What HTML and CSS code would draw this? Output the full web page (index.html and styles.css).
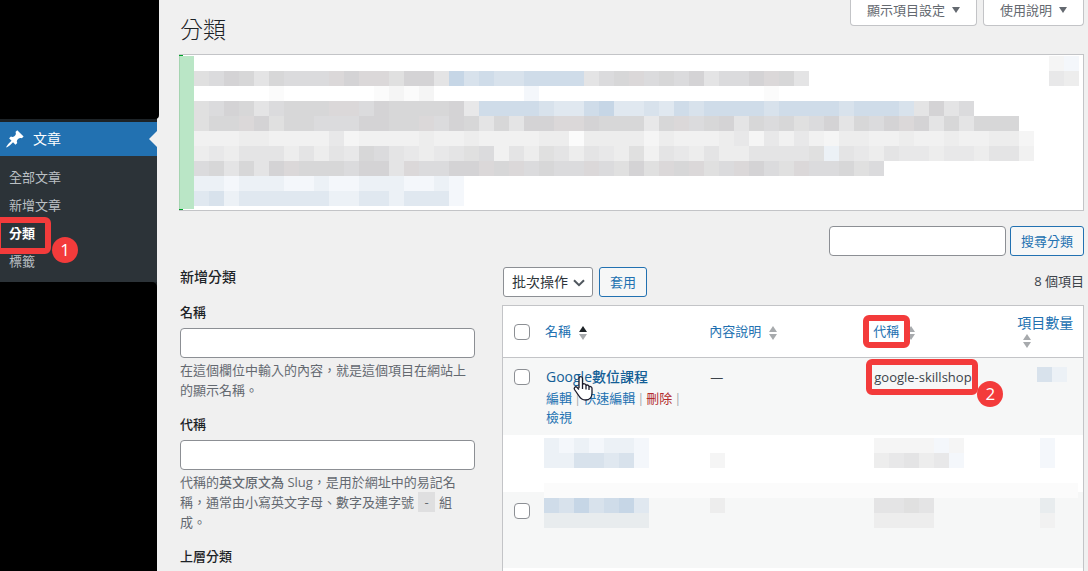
FILE: index.html
```html
<!DOCTYPE html>
<html lang="zh-Hant">
<head>
<meta charset="utf-8">
<title>分類</title>
<link rel="stylesheet" href="styles.css">
</head>
<body>
<div class="shell">
  <nav class="sidebar">
    <div class="mask mask-top"></div>
    <a class="menu-head" href="#">
      <svg class="pin" viewBox="0 0 20 20" aria-hidden="true"><path d="M10.44 3.02l1.82-1.82 6.36 6.35-1.83 1.82c-1.05-.68-2.48-.57-3.41.36l-.75.75c-.92.93-1.04 2.35-.35 3.41l-1.83 1.82-2.41-2.41-2.8 2.79c-.42.42-3.38 2.71-3.8 2.29s1.86-3.39 2.28-3.81l2.79-2.79L4.1 9.36l1.83-1.82c1.05.69 2.48.57 3.4-.36l.75-.75c.93-.92 1.05-2.35.36-3.41z"/></svg>
      文章
    </a>
    <ul class="submenu">
      <li><a href="#">全部文章</a></li>
      <li><a href="#">新增文章</a></li>
      <li class="current"><a href="#">分類</a><span class="ring ring-menu"></span><span class="step step-menu">1</span></li>
      <li><a href="#">標籤</a></li>
    </ul>
    <div class="mask mask-bottom"></div>
  </nav>

  <main class="main">
    <header class="top">
      <h1>分類</h1>
      <div class="tabs">
        <button type="button" class="tab">顯示項目設定<svg viewBox="0 0 8 6" aria-hidden="true"><path d="M0 0h8L4 6z"/></svg></button>
        <button type="button" class="tab">使用說明<svg viewBox="0 0 8 6" aria-hidden="true"><path d="M0 0h8L4 6z"/></svg></button>
      </div>
    </header>

    <section class="notice">
      <div class="notice-bar"></div>
      <svg class="mosaic" data-mosaic="notice" aria-hidden="true"></svg>
      <svg class="mosaic dismiss" data-mosaic="dismiss" aria-hidden="true"></svg>
    </section>

    <form class="search">
      <input type="search" class="field search-field" aria-label="搜尋分類">
      <button type="button" class="btn">搜尋分類</button>
    </form>

    <div class="columns">
      <form class="add">
        <h2>新增分類</h2>
        <div class="group">
          <label for="name">名稱</label>
          <input id="name" type="text" class="field">
          <p>在這個欄位中輸入的內容，就是這個項目在網站上的顯示名稱。</p>
        </div>
        <div class="group">
          <label for="slug">代稱</label>
          <input id="slug" type="text" class="field">
          <p>代稱的<em>英文原文為 Slug</em>，是用於網址中的易記名稱，通常由小寫英文字母、數字及連字號 <code>-</code> 組成。</p>
        </div>
        <div class="group">
          <label for="parent">上層分類</label>
          <select id="parent" class="field"><option>無</option></select>
        </div>
      </form>

      <section class="list">
        <div class="actions">
          <span class="bulk">
            <select aria-label="批次操作"><option>批次操作</option></select>
            <svg viewBox="0 0 12 8" aria-hidden="true"><path d="M1 1.2l5 5 5-5"/></svg>
          </span>
          <button type="button" class="btn">套用</button>
          <span class="count">8 個項目</span>
        </div>
        <table>
          <colgroup><col class="c-check"><col class="c-name"><col class="c-desc"><col class="c-slug"><col></colgroup>
          <thead>
            <tr>
              <th class="check"><input type="checkbox" aria-label="全選"></th>
              <th><a href="#">名稱</a><svg class="sort sorted" viewBox="0 0 8 14" aria-hidden="true"><path class="up" d="M4 0l4 6H0z"/><path d="M0 8h8l-4 6z"/></svg></th>
              <th><a href="#">內容說明</a><svg class="sort" viewBox="0 0 8 14" aria-hidden="true"><path class="up" d="M4 0l4 6H0z"/><path d="M0 8h8l-4 6z"/></svg></th>
              <th><span class="mark"><a href="#">代稱</a><span class="ring ring-head"></span></span><svg class="sort" viewBox="0 0 8 14" aria-hidden="true"><path class="up" d="M4 0l4 6H0z"/><path d="M0 8h8l-4 6z"/></svg></th>
              <th class="num"><a href="#">項目數量</a><svg class="sort" viewBox="0 0 8 14" aria-hidden="true"><path class="up" d="M4 0l4 6H0z"/><path d="M0 8h8l-4 6z"/></svg></th>
            </tr>
          </thead>
          <tbody>
            <tr class="alt first">
              <td class="check"><input type="checkbox" aria-label="選取 Google數位課程"></td>
              <td>
                <div class="name"><a href="#">Google數位課程</a>
                  <svg class="hand" viewBox="0 0 22 28" aria-hidden="true"><path d="M7 14V4.5C7 2 10.500 2 10.500 4.500V10.500C11 9.300 14 9.500 14 11.500C15 10.500 17 11 17 12.800C18.500 12 20 13 20 14.500V19C20 23 17.500 26 13.500 26C10 26 8.500 24.500 7 22L2.500 15.500C1.500 13.500 3.500 12 5 13.200L7 15.500M10.500 10.500V15M14 11.500V15.500M17 12.800V16"/></svg>
                </div>
                <div class="row-actions"><a href="#">編輯</a><span class="sep">|</span><a href="#">快速編輯</a><span class="sep">|</span><a href="#" class="delete">刪除</a><span class="sep">|</span><a href="#">檢視</a></div>
              </td>
              <td>—</td>
              <td><span class="mark">google-skillshop<span class="ring ring-slug"></span><span class="step step-slug">2</span></span></td>
              <td class="qty"><svg class="mosaic" data-mosaic="qty1" aria-hidden="true"></svg></td>
            </tr>
            <tr class="second">
              <td class="check"><span class="band"></span></td>
              <td><svg class="mosaic" data-mosaic="name2" aria-hidden="true"></svg></td>
              <td><svg class="mosaic" data-mosaic="desc2" aria-hidden="true"></svg></td>
              <td><svg class="mosaic" data-mosaic="slug2" aria-hidden="true"></svg></td>
              <td class="qty"><svg class="mosaic" data-mosaic="qty2" aria-hidden="true"></svg></td>
            </tr>
            <tr class="alt third">
              <td class="check"><input type="checkbox" aria-label="選取項目"></td>
              <td><svg class="mosaic" data-mosaic="name3" aria-hidden="true"></svg></td>
              <td><svg class="mosaic" data-mosaic="desc3" aria-hidden="true"></svg></td>
              <td><svg class="mosaic" data-mosaic="slug3" aria-hidden="true"></svg></td>
              <td class="qty"><svg class="mosaic" data-mosaic="qty3" aria-hidden="true"></svg></td>
            </tr>
            <tr class="second"><td class="check"></td><td></td><td></td><td></td><td></td></tr>
          </tbody>
        </table>
      </section>
    </div>
  </main>
</div>
<script src="mosaic.js"></script>
</body>
</html>
```
FILE: styles.css
```css
* { box-sizing: border-box; }

body {
  margin: 0;
  overflow: hidden;
  background: #f0f0f0;
  color: #3c434a;
  font: 13px/20px "Open Sans", "Noto Sans CJK TC", sans-serif;
}

a { color: #2271b1; text-decoration: none; }
button, input, select { font: inherit; margin: 0; }
h1, h2, p, ul { margin: 0; padding: 0; font-weight: 400; }

.shell { display: flex; height: 100vh; }

.sidebar {
  display: flex;
  flex-direction: column;
  flex: 0 0 157px;
  background: #1d2327;
}
.mask { background: #000; }
.mask-top { height: 119px; margin: 0 -2px 3px 0; border-radius: 0 0 4px 0; }
.mask-bottom { flex: 1; border-radius: 0 5px 0 0; }

.menu-head {
  position: relative;
  display: flex;
  align-items: center;
  gap: 8px;
  height: 34px;
  padding-left: 5px;
  background: #2271b1;
  color: #fff;
  font-size: 14px;
}
.menu-head::after {
  content: "";
  position: absolute;
  right: 0;
  top: 9px;
  border: 8px solid transparent;
  border-left: 0;
  border-right-color: #f0f0f0;
}
.pin { width: 20px; height: 20px; fill: #fff; }

.submenu { padding: 7px 0; background: #2c3338; list-style: none; }
.submenu li { position: relative; padding: 4px 9px; }
.submenu a { color: #bbc0c4; }
.submenu .current a { color: #fff; font-weight: 700; }

.ring { position: absolute; border: 6px solid #f33b3b; border-radius: 6px; }
.ring-menu { left: -5px; top: -2px; width: 56px; bottom: -7px; }
.ring-head { inset: -7px -11px -7px -10px; }
.ring-slug { inset: -8px -6px -8px -8px; }
.step {
  position: absolute;
  width: 26px;
  height: 26px;
  border-radius: 50%;
  background: #f33b3b;
  color: #fff;
  font-size: 17px;
  line-height: 26px;
  text-align: center;
}
.step-menu { left: 52px; top: 18px; z-index: 1; }
.step-slug { left: 103px; top: 14px; }

.main { flex: 1; min-width: 0; padding: 0 4px 0 22px; overflow: hidden; }

.top { display: flex; justify-content: space-between; align-items: flex-start; height: 54px; }
h1 { padding: 14px 0 0 1px; color: #1d2327; font-size: 23px; line-height: 30px; font-weight: 300; }
.tabs { display: flex; gap: 6px; }
.tab {
  display: flex;
  align-items: center;
  gap: 7px;
  height: 26px;
  padding: 0 16px 5px;
  border: 1px solid #c3c4c7;
  border-top: 0;
  border-radius: 0 0 4px 4px;
  background: #fff;
  color: #646970;
}
.tab svg { width: 8px; height: 6px; fill: #646970; }

.notice {
  display: flex;
  height: 157px;
  padding: 1px 4px 1px 0;
  border: 1px solid #c3c4c7;
  border-left: 0;
  background: linear-gradient(90deg, #00a32a 4px, #fff 4px);
}
.notice-bar { flex: 0 0 15px; border-left: 1px solid #a5d4b1; background: #bae6c6; }
.mosaic { display: block; flex: none; }
.dismiss { margin-left: auto; }

.search { display: flex; justify-content: flex-end; gap: 4px; padding-top: 15px; }
.field {
  display: block;
  width: 100%;
  height: 30px;
  border: 1px solid #8c8f94;
  border-radius: 4px;
  background: #fff;
}
.search-field { width: 177px; }
.btn {
  height: 30px;
  padding: 0 10px;
  border: 1px solid #2271b1;
  border-radius: 3px;
  background: #f6f7f7;
  color: #2271b1;
}

.columns { display: grid; grid-template-columns: 323fr 582fr; }
.add { padding: 11px 27px 0 1px; }
h2 { color: #1d2327; font-size: 14px; line-height: 20px; font-weight: 500; margin-bottom: 15px; }
.group { margin-bottom: 14px; }
.group label { display: block; margin-bottom: 6px; color: #1d2327; font-weight: 500; }
.group p { margin-top: 2px; color: #646970; }
.group em { font-style: normal; font-weight: 500; }
code { display: inline-block; margin: 0 1px; padding: 0 6px; background: #dfdfe0; font: inherit; }

.actions { display: flex; gap: 6px; padding: 11px 0 8px 1px; }
.bulk { position: relative; }
.bulk select {
  width: 90px;
  height: 30px;
  padding: 0 8px;
  border: 1px solid #8c8f94;
  border-radius: 3px;
  background: #fff;
  color: #2c3338;
  font-size: 14px;
  appearance: none;
}
.bulk svg {
  position: absolute;
  right: 8px;
  top: 12px;
  width: 12px;
  height: 8px;
  fill: none;
  stroke: #50575e;
  stroke-width: 2;
  pointer-events: none;
}
.count { margin-left: auto; line-height: 28px; }

table {
  width: 100%;
  table-layout: fixed;
  border: 1px solid #c3c4c7;
  border-spacing: 0;
  background: #fff;
}
.c-check { width: 33px; }
.c-name, .c-desc { width: 28.3%; }
.c-slug { width: 25%; }
th, td { padding: 9px 0 8px 10px; text-align: left; vertical-align: top; font-weight: 400; }
th { padding: 6px 0 6px 9px; height: 52px; border-bottom: 1px solid #c3c4c7; vertical-align: middle; line-height: 19px; }
th.check, td.check { padding-left: 11px; }
th.num { padding: 5px 0 6px 8px; font-size: 14px; line-height: 18px; }
.num .sort { display: block; margin: 2px 0 0 6px; }
input[type="checkbox"] {
  display: block;
  width: 16px;
  height: 16px;
  margin: 2px 0;
  border: 1px solid #8c8f94;
  border-radius: 4px;
  background: #fff;
  appearance: none;
}
.sort { width: 8px; height: 14px; margin-left: 8px; vertical-align: middle; fill: #a7aaad; }
.sorted .up { fill: #1d2327; }
.alt { background: #f6f7f7; }
.mark { position: relative; display: inline-block; }
.name { position: relative; font-size: 14px; margin-bottom: 2px; }
.name a { color: #135e96; font-weight: 500; }
.hand { position: absolute; left: 26px; top: 7px; width: 22px; height: 28px; fill: #fff; stroke: #1b1b2b; stroke-width: 1.3; }
.row-actions { line-height: 19px; color: #a7aaad; }
.row-actions a { display: inline-block; white-space: nowrap; }
.row-actions .delete { color: #b32d2e; }
.sep { display: inline-block; margin: 0 2px; }

.second, .third { position: relative; }
.second td { height: 57px; padding: 3px 0 0 8px; }
.third td { height: 76px; padding: 6px 0 0 8px; }
.third td.check { padding: 9px 0 0 11px; }
td.qty { padding-left: 28px; }
.second td:nth-child(n+3):nth-child(-n+4), .third td:nth-child(n+3):nth-child(-n+4) { padding-left: 10px; }
.second td.qty, .third td.qty { padding-left: 31px; }
.band { position: absolute; left: 41px; right: 5px; top: 48px; height: 15px; background: #fbfbfb; z-index: 1; }
```
FILE: mosaic.js
```js
// Pixelated blocks: each letter is one 15px cell, "." is empty.
const CELL = 15;
const COLORS = {
  a: '#e0e0e0', b: '#dbdbdd', c: '#d4d3d5', d: '#d7d7d8', e: '#e4e4e5',
  g: '#ededed', h: '#f1f1f1', i: '#f5f5f5', j: '#fbfbfb', k: '#e8e8e9',
  m: '#e8ecee', p: '#dbd8d9',
  B: '#c6d6e6', C: '#cfdce9', D: '#d8e2ec', E: '#e0e8f0', F: '#ecf1f6', G: '#f4f7fb'
};
const MOSAICS = {
  notice: [
    '',
    'abcdedbbbpcppacceBDCDDCCCCebdpbdbcebbcpde',
    '.....j......jiji......G...............j',
    'abcdebdddppbcddddckCCCCDEECBEEDECDCCCCDCCCCDCCCDeceb',
    'addpcaddbbbccddpbcdedeccppcdddkdpbdcedbdabcedbcpcededdd',
    'hhhgghhhhkihhhhghhghhhhggjggggighhhgkikhkhigghhghhghhggi',
    'gkgeeegegekdbekgkeabhegaegekgahekgeggeeeeaFekgekkgkkgeeh',
    'bdedecpdddbccepbbccpdpbdbbpbacapdpabpcbapbbdab',
    'FFGFFFGGFGGFFFGGFG',
    'EDFEEEEEEFFEEFEEEG'
  ],
  dismiss: ['iG', 'kg'],
  qty1: ['DF'],
  name2: ['FGFGFFG', 'FFDDEDG'],
  desc2: ['', 'i'],
  slug2: ['iiiiGi', 'gkegkG'],
  qty2: ['G', 'G'],
  name3: ['CDBDCBE', 'mmmmmmm'],
  desc3: ['g'],
  slug3: ['eeae', 'gggg'],
  qty3: ['m', 'h']
};

for (const svg of document.querySelectorAll('[data-mosaic]')) {
  const rows = MOSAICS[svg.dataset.mosaic];
  svg.setAttribute('width', Math.max(...rows.map(r => r.length)) * CELL);
  svg.setAttribute('height', rows.length * CELL);
  svg.setAttribute('shape-rendering', 'crispEdges');
  rows.forEach((row, y) => [...row].forEach((key, x) => {
    if (key === '.') return;
    const rect = document.createElementNS('http://www.w3.org/2000/svg', 'rect');
    rect.setAttribute('x', x * CELL);
    rect.setAttribute('y', y * CELL);
    rect.setAttribute('width', CELL);
    rect.setAttribute('height', CELL);
    rect.setAttribute('fill', COLORS[key]);
    svg.append(rect);
  }));
}
```
